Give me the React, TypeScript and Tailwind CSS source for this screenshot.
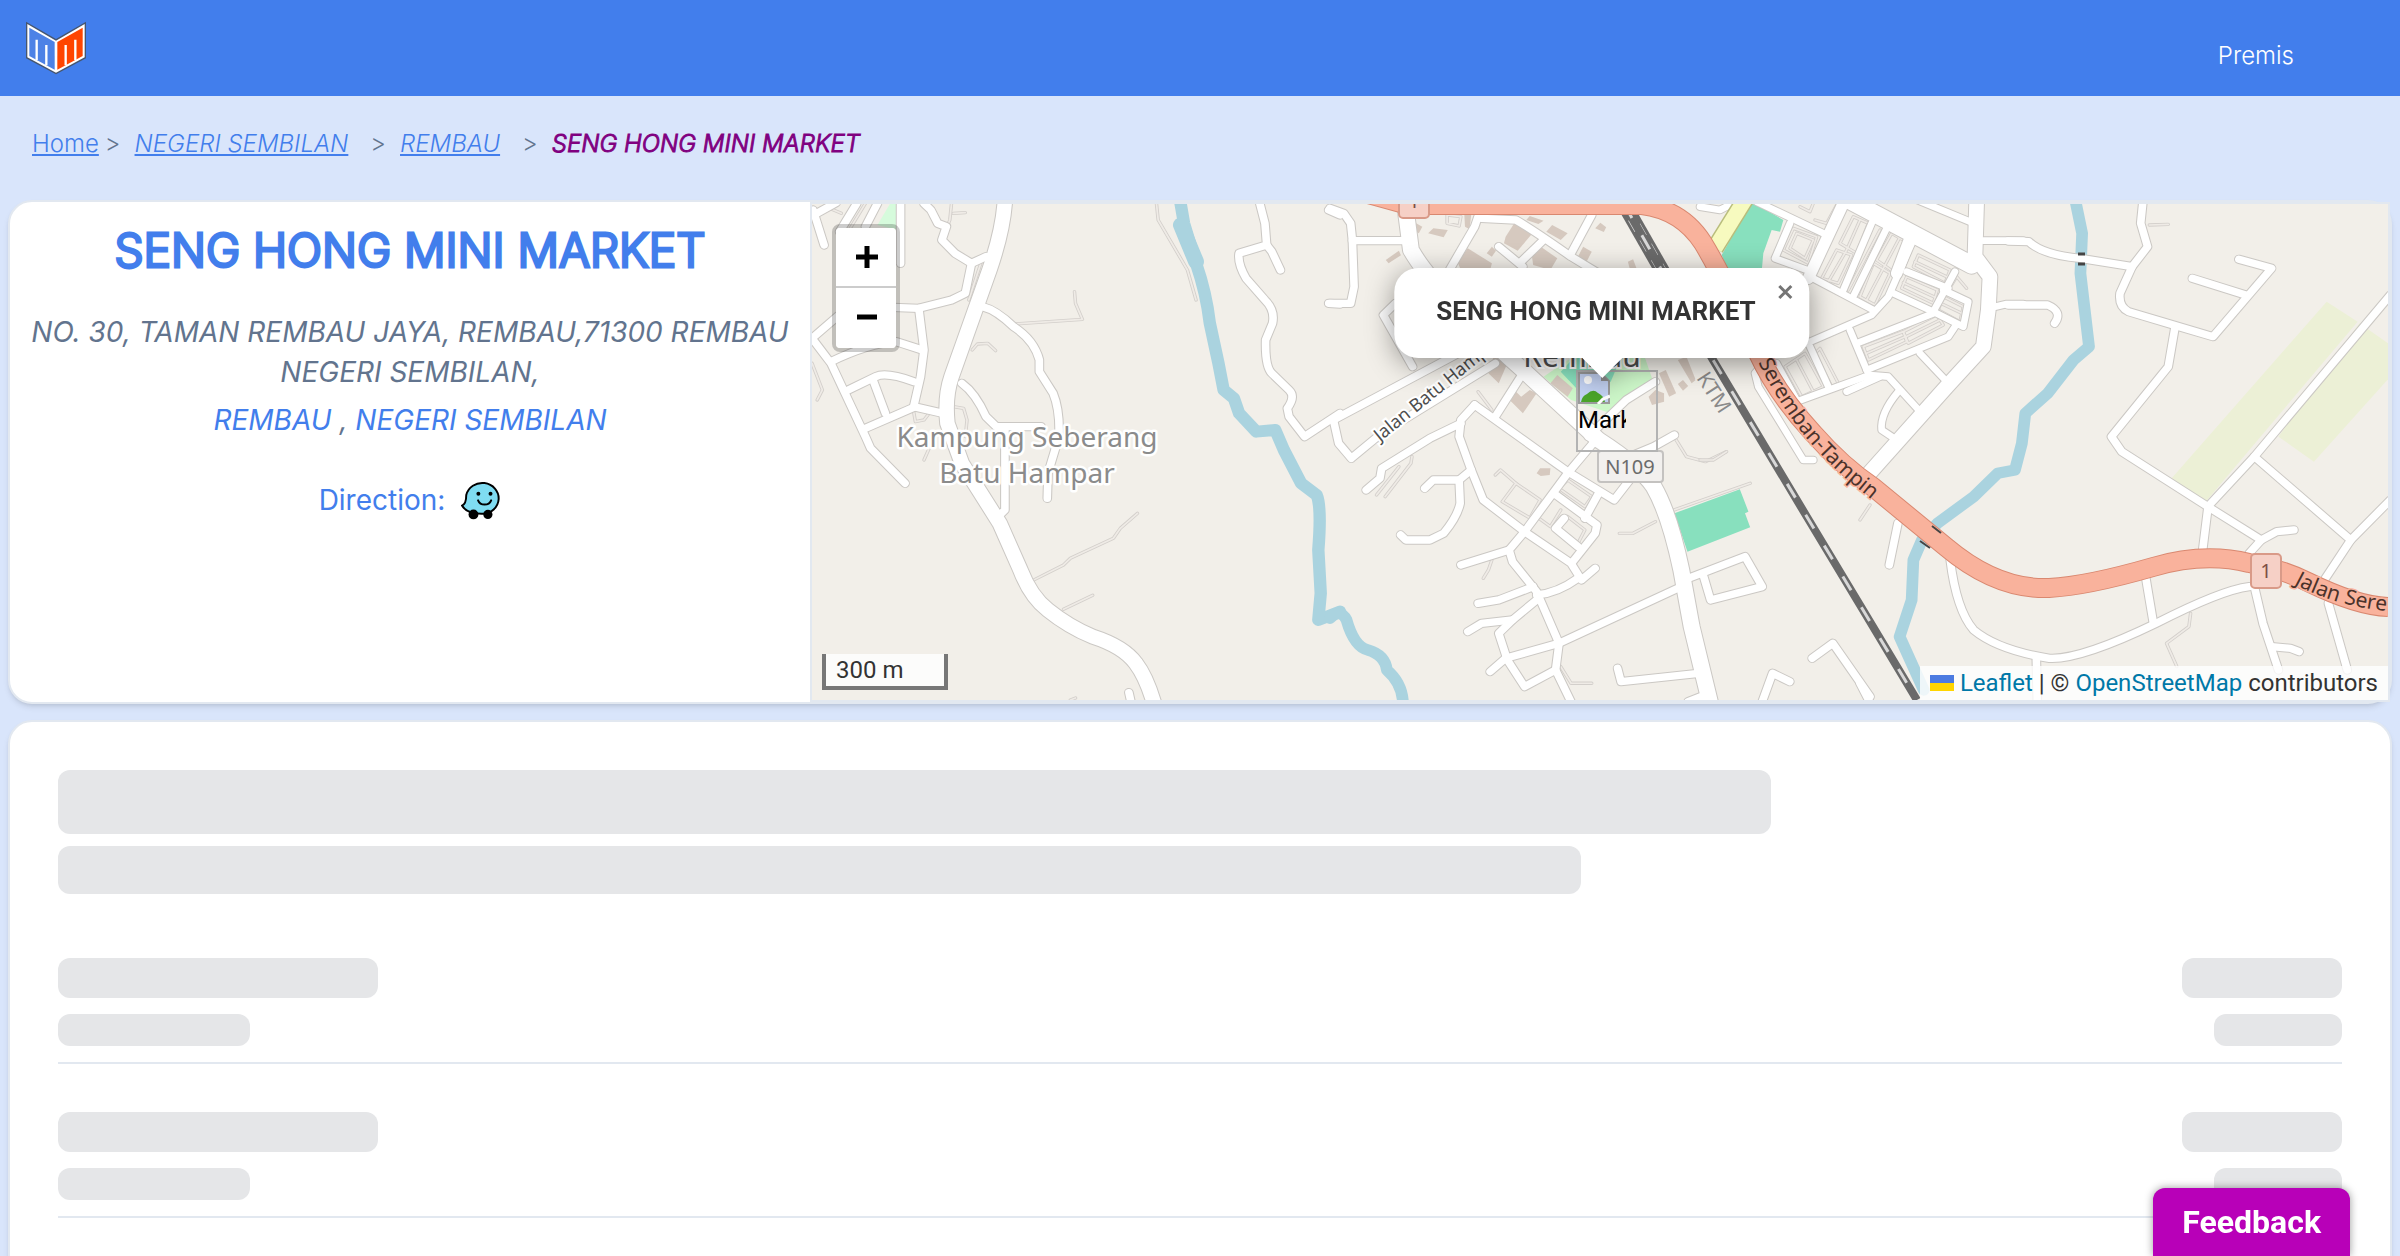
import React from 'react';

type Road = { d: string; w: number };

type Tile = {
  id: string;
  transform: string;
  areas: { d: string; fill: string }[];
  rivers: Road[];
  service: string[];
  roads: Road[];
};

const minor = (w: number, paths: string[]): Road[] => paths.map((d) => ({ d, w }));

// Every tile is drawn in its own units and scaled down into the map
const tiles: Tile[] = [
  {
    id: 'west',
    transform: 'translate(-12 -14) scale(0.3444 0.3333)',
    areas: [{ d: 'M225 105 L262 40 L282 40 L282 120 Z', fill: '#d6fbdc' }],
    rivers: [
      {
        d: 'M1105 40 L1115 100 L1150 220 Q1180 310 1190 400 L1215 520 L1230 600 L1260 625 L1275 670 L1325 725 L1380 720 L1405 780 L1455 880 L1500 915 Q1515 950 1505 1080 L1512 1210 L1505 1290 L1568 1265',
        w: 36,
      },
      { d: 'M1106 105 L1150 215', w: 46 },
    ],
    service: [
      'M797 305 L800 340 L820 388 L620 402',
      'M500 480 L515 462 L545 460 L568 482',
      'M675 1172 L765 1125 L785 1105 L910 1045 L930 1015 L980 970',
      'M765 1258 L850 1216',
      'M1035 40 L1040 90 L1125 240 L1150 330',
      'M445 650 L475 655 L485 690 L480 740',
      'M35 520 L65 600 L50 630',
      'M330 665 L335 695 L360 690 L375 670',
      'M375 775 L360 810',
      'M440 40 L435 90 L425 115',
      'M445 70 L480 68',
      'M190 40 L140 125',
      'M75 50 L120 70',
      'M525 220 L490 330',
      'M785 1530 L800 1524',
    ],
    roads: [
      ...minor(22, [
        'M38 60 L70 165',
        'M40 75 L105 38',
        'M165 40 L115 125',
        'M225 40 L190 110',
        'M292 40 L292 220',
        'M360 40 L380 60 L400 100 L425 110 L412 150 L450 190 L498 220 L540 200',
        'M498 220 L480 310 L440 330 L345 355 L270 352',
        'M35 445 L110 378',
        'M345 355 L360 480 L350 560 L330 650 L415 670',
        'M35 445 L90 520 L190 740 L205 775 L305 880',
        'M90 515 Q200 460 280 455 L355 480',
        'M140 600 L220 560 Q250 545 330 575',
        'M212 570 L248 670',
        'M190 715 L335 650',
        'M530 350 Q570 360 620 410 Q680 450 695 510 L695 545 L735 610 Q755 660 752 740 L720 850 L718 925',
        'M470 580 Q510 610 540 680 L570 710 L700 710',
        'M595 720 L595 960 L575 980',
        'M1335 40 L1350 100 L1355 165 L1275 190 Q1270 220 1295 265 L1350 330 Q1380 360 1372 400 L1352 450 Q1350 530 1370 550 L1420 600 Q1440 620 1415 655 L1420 680 L1465 740 L1568 670',
        'M1355 165 L1370 185 L1395 240',
        'M1535 60 L1568 75',
        'M1535 340 L1568 342',
        'M955 1508 L962 1540',
      ]),
      {
        d: 'M595 30 Q590 120 550 240 L440 560 Q420 620 428 700 L470 820 L580 1000 L640 1140 Q670 1220 720 1260 Q780 1310 850 1340 Q940 1370 975 1420 Q1005 1460 1028 1540',
        w: 42,
      },
    ],
  },
  {
    id: 'centre',
    transform: 'translate(518 -14) scale(0.3444 0.3333)',
    areas: [
      { d: 'M620 560 L720 490 L910 490 L940 580 L815 670 L700 630 Z', fill: '#cdf7c9' },
      { d: 'M670 545 L720 490 L850 490 L815 575 L720 600 Z', fill: '#88e0be' },
      { d: 'M1000 970 L1190 898 L1215 965 L1205 970 L1220 1012 L1038 1085 Z', fill: '#88e0be' },
      { d: 'M510 140 L535 100 L588 130 L545 182 L505 160 Z', fill: '#d6c9bf' },
      { d: 'M370 215 L400 175 L470 220 L465 240 L380 240 Z', fill: '#d6c9bf' },
      { d: 'M585 190 L605 165 L660 205 L640 240 L590 225 Z', fill: '#d6c9bf' },
      { d: 'M285 130 L300 115 L342 120 L330 142 Z', fill: '#d6c9bf' },
      { d: 'M570 90 L580 78 L620 92 L605 102 Z', fill: '#d6c9bf' },
      { d: 'M720 200 L735 170 L760 185 L745 215 Z', fill: '#d6c9bf' },
      { d: 'M240 120 L250 100 L268 110 L258 130 Z', fill: '#d6c9bf' },
      { d: 'M162 210 L200 182 L206 196 L170 220 Z', fill: '#d6c9bf' },
      { d: 'M770 115 L785 98 L802 112 L795 126 Z', fill: '#d6c9bf' },
      { d: 'M628 125 L645 105 L690 130 L670 150 Z', fill: '#d6c9bf' },
      { d: 'M455 190 L470 170 L482 182 L470 200 Z', fill: '#d6c9bf' },
      { d: 'M460 550 L475 500 L515 520 L490 580 Z', fill: '#d6c9bf' },
      { d: 'M512 620 L530 595 L555 620 L580 600 L600 610 L560 670 Z', fill: '#d6c9bf' },
      { d: 'M640 580 L660 555 L705 595 L690 620 Z', fill: '#d6c9bf' },
      { d: 'M600 850 L610 835 L640 835 L638 855 L612 858 Z', fill: '#d6c9bf' },
      { d: 'M925 620 L945 600 L970 610 L970 635 L935 645 Z', fill: '#d6c9bf' },
      { d: 'M955 550 L975 540 L1005 610 L985 620 Z', fill: '#d6c9bf' },
      { d: 'M1010 510 L1035 500 L1062 570 L1050 580 Z', fill: '#d6c9bf' },
      { d: 'M1010 582 L1025 570 L1040 588 L1025 602 Z', fill: '#d6c9bf' },
      { d: 'M865 215 L880 208 L890 235 L870 235 Z', fill: '#d6c9bf' },
      { d: 'M390 75 L410 75 L405 118 L392 110 Z', fill: '#d6c9bf' },
    ],
    rivers: [{ d: 'M0 1285 Q30 1255 48 1290 Q70 1370 110 1380 Q160 1395 165 1440 Q210 1480 212 1540', w: 34 }],
    service: [
      'M985 965 L1220 880',
      'M840 1030 L880 1030 L945 995',
      'M480 855 L495 840 L540 880 L500 935 L590 990',
      'M540 880 L610 930 L580 985',
      'M160 920 L235 820 L238 800',
      'M135 915 L200 830',
      'M430 605 L470 660',
      'M470 1110 L460 1140 L445 1165',
      'M670 1430 L700 1480 L760 1480',
      'M1005 750 L1035 800 L1090 815 L1150 785',
      'M665 895 L690 870 L760 920 L740 950 Z',
      'M690 980 L740 1020 L720 1060 L690 1035',
      'M600 980 L640 1010 L670 960',
      'M340 75 L380 80 L375 108 L340 100 Z',
    ],
    roads: [
      ...minor(22, [
        'M0 55 L40 70 L60 100 L65 150 L70 290 L60 340 L0 340',
        'M65 152 L215 152',
        'M430 80 L420 110 L330 270',
        'M440 85 L540 90 Q590 120 700 200 L780 250',
        'M760 75 L700 190',
        'M620 150 L550 220',
        'M490 170 L560 230',
        'M190 340 L155 375 L240 530',
        'M10 690 L500 420',
        'M10 690 L25 760 L62 805 L150 730 L480 520',
        'M560 550 L480 680',
        'M420 645 L690 845 L825 930 L870 870',
        'M420 645 L380 690 L375 740 L410 840 L445 930 L565 1025 L700 1120 L730 1170 L770 1135',
        'M380 700 L290 745 L150 835 L145 865 L105 900',
        'M780 740 L690 850 L565 1025 L520 1080 L530 1115 L600 1205 L665 1360 L655 1440 L702 1540',
        'M520 1080 L380 1125',
        'M275 895 L300 870 L375 870 L410 840',
        'M375 870 L378 940 Q370 980 330 1030 L290 1050 L220 1050 L205 1035',
        'M650 910 L775 1005 L770 1030 L705 1115',
        'M780 910 L740 985',
        'M680 985 L655 1015 L720 1070',
        'M600 1215 Q660 1210 720 1165',
        'M590 1190 L490 1230 L430 1240',
        'M600 1230 L530 1290 L440 1300 L400 1325',
        'M530 1290 L490 1330 L515 1410 L565 1490 L655 1440',
        'M465 1445 L510 1405 L665 1360 L1010 1195',
        'M870 800 L940 770 L1000 735',
        'M945 575 L860 630 L750 740',
        'M1040 1165 L1205 1100 L1255 1190 L1105 1230 L1085 1160',
        'M835 1435 L845 1475 L1070 1450',
        'M1040 1535 L1090 1515',
        'M1400 1405 L1460 1360 L1568 1520',
        'M1255 1535 L1285 1450 L1335 1475',
      ]),
      {
        d: 'M220 60 L235 180 Q300 300 560 540 L780 750 Q900 830 940 890 Q985 970 1020 1140 L1050 1310 L1104 1540',
        w: 46,
      },
    ],
  },
  {
    id: 'north',
    transform: 'translate(888 -4) scale(0.3333)',
    areas: [{ d: 'M155 5 L250 60 L240 95 L215 90 L190 160 L185 215 L85 215 L65 165 Z', fill: '#88e0be' }],
    rivers: [],
    service: [
      'M420 130 L460 50 L505 70 L470 160 Z',
      'M365 235 L410 150 L455 165 L415 250 Z',
      'M480 60 L440 150 L385 245',
      'M540 90 L445 270',
      'M530 180 L575 100 L618 125 L580 215 Z',
      'M480 290 L520 190 L570 220 L525 315 Z',
      'M598 115 L550 205 L500 300',
      'M640 200 L655 165 L750 210 L735 250 Z',
      'M645 185 L740 230',
      'M605 265 L620 230 L712 270 L700 310 Z',
      'M610 248 L705 292',
      'M715 330 L730 290 L790 320 L780 365 Z',
      'M722 310 L785 340',
      'M755 255 L770 230 L800 265',
      'M490 440 L610 395 L620 425 L505 480 Z',
      'M500 460 L615 410',
      'M610 395 L710 345 L730 375 L625 430 Z',
      'M618 410 L720 360',
      'M255 500 L315 460 L370 560 L305 590 Z',
      'M290 480 L340 575',
      'M345 460 L360 445 L415 550 L395 560 Z',
      'M250 150 L280 85 L350 110 L325 190 Z',
      'M270 145 L290 100 L340 120 L315 175 Z',
      'M300 20 L330 35 L340 10',
      'M345 60 L380 70 L410 15',
      'M0 780 L40 780 L80 755',
      'M480 960 L510 915',
    ],
    roads: [
      ...minor(20, [
        'M0 20 L60 30 L95 12',
        'M640 -5 L810 65',
        'M850 122 L970 122',
        'M885 320 L920 312 L970 312',
        'M170 5 L370 100',
        'M270 70 L225 175 L320 210',
        'M340 235 L520 330',
        'M515 70 L430 270',
        'M565 75 L462 285',
        'M635 130 L565 290 L515 345 L320 430',
        'M580 280 L700 335 L790 380 L805 305 L730 270',
        'M765 215 L700 335',
        'M620 215 L745 265',
        'M450 390 L500 510',
        'M700 340 L470 430',
        'M330 440 L385 560',
        'M500 510 L745 410 L765 380',
        'M660 460 L745 550',
        'M290 605 L510 525 L565 530 L665 640',
        'M440 575 L540 530',
        'M595 575 Q540 640 545 690 L590 720',
        'M200 480 L165 520 L175 560 L310 780 L340 780',
        'M230 490 L290 600',
      ]),
      ...minor(34, ['M430 10 L325 235', 'M630 115 L590 220']),
      { d: 'M390 -30 L815 195', w: 52 },
      { d: 'M830 5 L825 170 L870 230 L865 330 L850 440 L740 560 L490 840', w: 44 },
    ],
  },
  {
    id: 'east',
    transform: 'translate(1048 -14) scale(0.3444 0.3333)',
    areas: [
      { d: 'M1355 335 L1445 395 L1000 940 L905 865 Z', fill: '#ecf0d6' },
      { d: 'M1450 400 L1540 465 L1540 560 L1318 815 L1215 740 Z', fill: '#ecf0d6' },
    ],
    rivers: [
      {
        d: 'M625 30 L645 130 L640 250 L665 470 L620 510 L545 610 L480 670 L470 760 L450 840 L400 850 L330 920 L225 1000 L180 1050 L155 1110 L150 1230 L115 1340 L185 1500',
        w: 34,
      },
    ],
    service: ['M840 105 L895 103', 'M960 1270 L955 1310 L890 1360 L920 1430'],
    roads: minor(22, [
      'M430 153 L490 155 Q530 195 640 205 L790 230',
      'M430 345 L545 345 Q590 365 565 400',
      'M822 30 L815 100 L835 170 L790 230 L755 310 Q750 350 780 365 L910 405 L1025 440 L1195 235 L1100 208',
      'M1120 315 L965 265',
      'M915 410 L895 530 L730 740 L760 785 L1010 950 L1165 1050 L1210 1025 L1260 1020',
      'M1165 1050 L1130 1090',
      'M1010 955 L995 1080',
      'M1010 950 L1145 800 L1540 315',
      'M1145 800 L1425 1050',
      'M1540 930 L1425 1050 L1345 1175',
      'M1360 1240 L1415 1440',
      'M1145 1190 L1170 1300 L1215 1440',
      'M1195 1370 L1250 1375 L1275 1385',
      'M262 1110 Q280 1260 330 1320 Q400 1380 550 1405 Q640 1410 860 1300 Q1050 1200 1130 1190',
      'M830 1165 L852 1300',
      'M512 1410 L515 1540',
      'M110 1000 L85 1125',
      'M0 1480 L30 1540',
    ]),
  },
];

const trunk =
  'M549 -12 L596 1 L830 1 Q870 6 891 39 Q910 70 946 149 Q965 190 1001 229 Q1030 262 1061 283 L1134 343 Q1185 386 1237 384 Q1275 382 1341 363 Q1392 348 1437 359 Q1470 365 1496 378 Q1545 402 1576 403';
const trunkLabel =
  'M760 -20 L891 39 Q910 70 942 149 Q960 190 995 235 Q1023 267 1054 291 L1126 351';
const railway = 'M812 0 L901 156 L995 313 L1048 401 L1105 496';

const MapCanvas: React.FC = () => (
  <svg
    className="block h-full w-full"
    viewBox="0 0 1576 496"
    preserveAspectRatio="xMidYMid slice"
    aria-hidden="true"
    fontFamily='"Noto Sans", sans-serif'
  >
    <rect width="1576" height="496" fill="#f2efe9" />
    {tiles.map((tile) => (
      <g key={tile.id} transform={tile.transform} fill="none" strokeLinejoin="round">
        {tile.areas.map((area) => (
          <path key={area.d} d={area.d} fill={area.fill} />
        ))}
        {tile.rivers.map((river) => (
          <path key={river.d} d={river.d} stroke="#aad3df" strokeWidth={river.w} strokeLinecap="round" />
        ))}
      </g>
    ))}
    {tiles.map((tile) => (
      <g key={tile.id} transform={tile.transform} fill="none" strokeLinejoin="round" strokeLinecap="round">
        {tile.service.map((d) => (
          <path key={d} d={d} stroke="#d3cfcb" strokeWidth={10} />
        ))}
        {tile.service.map((d) => (
          <path key={`${d}-fill`} d={d} stroke="#efebe6" strokeWidth={5} />
        ))}
        {tile.roads.map((road) => (
          <path key={road.d} d={road.d} stroke="#cbc8c4" strokeWidth={road.w + 6} />
        ))}
      </g>
    ))}
    {tiles.map((tile) => (
      <g key={tile.id} transform={tile.transform} fill="none" strokeLinejoin="round" strokeLinecap="round">
        {tile.roads.map((road) => (
          <path key={road.d} d={road.d} stroke="#ffffff" strokeWidth={road.w} />
        ))}
      </g>
    ))}

    <g fill="none">
      <path d="M812 0 L872 105" stroke="#6a6a6a" strokeWidth="15" />
      <path d="M816 0 L876 105" stroke="#d8d8d8" strokeWidth="2" strokeDasharray="13 10" />
      <path d="M810 4 L868 105" stroke="#d8d8d8" strokeWidth="2" strokeDasharray="13 10" strokeDashoffset="9" />
      <path d={railway} stroke="#6a6a6a" strokeWidth="8" />
      <path d={railway} stroke="#d8d8d8" strokeWidth="3" strokeDasharray="16 20" />
      <path d="M934 -6 L903 44" stroke="#b9bd7c" strokeWidth="18" />
      <path d="M934 -6 L903 44" stroke="#f7fabf" strokeWidth="15" />
      <path d={trunk} stroke="#d98870" strokeWidth="20" />
      <path d={trunk} stroke="#f9b29c" strokeWidth="18" />
      <path d="M1120 322 L1129 329 M1108 337 L1118 344" stroke="#444444" strokeWidth="2" />
      <path d="M1266 50 h7 M1266 60 h7" stroke="#444444" strokeWidth="3" />
    </g>

    <g fill="#8b8b8b" stroke="#ffffff" strokeWidth="5" strokeLinejoin="round" paintOrder="stroke" textAnchor="middle" fontSize="28">
      <text x="215" y="243">Kampung Seberang</text>
      <text x="215" y="279">Batu Hampar</text>
    </g>
    <text x="770" y="163" fill="#4d4d4d" stroke="#ffffff" strokeWidth="4" paintOrder="stroke" textAnchor="middle" fontSize="30">
      Rembau
    </text>
    <text transform="translate(568 238) rotate(-39)" fill="#4d4d4d" stroke="#ffffff" strokeWidth="4" paintOrder="stroke" fontSize="18">
      Jalan Batu Hampar
    </text>
    <text transform="translate(884 174) rotate(57)" fill="#8a8a8a" stroke="#f2efe9" strokeWidth="3" paintOrder="stroke" fontSize="21">
      KTM
    </text>
    <path id="trunk-label" d={trunkLabel} fill="none" />
    <path id="trunk-label-east" d="M1482 380 Q1530 406 1600 409" fill="none" />
    <g fill="#4b322b" stroke="#f9b29c" strokeWidth="3" paintOrder="stroke" fontSize="21">
      <text textAnchor="end">
        <textPath href="#trunk-label" startOffset="84%">
          Jalan Seremban-Tampin
        </textPath>
      </text>
      <text>
        <textPath href="#trunk-label-east">Jalan Sere</textPath>
      </text>
    </g>

    <g strokeWidth="2" textAnchor="middle" fontSize="20">
      <rect x="587" y="-20" width="30" height="34" rx="4" fill="#f6d0c6" stroke="#d99a88" />
      <text x="602" y="4" fill="#7c4f45">1</text>
      <rect x="1439" y="350" width="30" height="34" rx="4" fill="#f6d0c6" stroke="#d99a88" />
      <text x="1454" y="374" fill="#7c4f45">1</text>
      <rect x="786" y="247" width="65" height="31" rx="3" fill="#f2f0ee" stroke="#c4c2c0" />
      <text x="818" y="270" fill="#6b6b6b">N109</text>
    </g>
  </svg>
);

const Logo: React.FC = () => (
  <svg className="h-14 w-15" viewBox="0 0 180 162" aria-hidden="true">
    <path d="M0 2 L90 54 L180 2 V112 L90 160 L0 112 Z" fill="#46566f" />
    <path d="M4 9 L90 59 L176 9 V109 L90 155 L4 109 Z" fill="#ffffff" />
    <path d="M10 20 L86 63 V146 L10 105 Z" fill="#4d82e6" />
    <path d="M32 56 V117 M61 72 V133" stroke="#ffffff" strokeWidth="7" />
    <path d="M170 20 L94 63 V146 L170 105 Z" fill="#ff4500" />
    <path d="M148 56 V117 M119 72 V133" stroke="#ffffff" strokeWidth="7" />
  </svg>
);

const WazeIcon: React.FC = () => (
  <svg className="h-10 w-10" viewBox="0 0 122 122" aria-hidden="true">
    <path
      d="M16 46 A50 47 0 1 1 66 103 Q18 104 3 78 Q16 74 16 46 Z"
      fill="#7fdcf2"
      stroke="#000000"
      strokeWidth="6"
      strokeLinejoin="round"
    />
    <circle cx="38" cy="105" r="15" />
    <circle cx="82" cy="105" r="14" />
    <circle cx="53" cy="42" r="6" />
    <circle cx="90" cy="42" r="6" />
    <path d="M52 62 Q57 75 72 75 Q87 75 92 62" fill="none" stroke="#000000" strokeWidth="6" strokeLinecap="round" />
  </svg>
);

const BrokenImage: React.FC = () => (
  <svg className="block h-8 w-8" viewBox="0 0 32 32" aria-hidden="true">
    <path d="M1 1 H23 L31 9 V31 H1 Z" fill="#c4d3f4" stroke="#9c9c9c" strokeWidth="2" />
    <circle cx="10" cy="8" r="4" fill="#ffffff" />
    <path d="M3 30 Q4 24 9 22 Q15 16 20 21 Q26 24 27 30 Z" fill="#4ba52a" />
    <path d="M23 1 V9 H31 Z" fill="#8f8f8f" />
    <path d="M20 32 L25 27 L32 24" fill="none" stroke="#ffffff" strokeWidth="3" />
  </svg>
);

const StoreMap: React.FC = () => (
  <div className="relative h-[500px] min-w-0 flex-1 overflow-hidden border-2 border-slate-200 font-[Roboto,sans-serif] text-2xl font-normal text-[#333333]">
    <MapCanvas />

    <div className="absolute top-5 left-5 flex flex-col rounded-lg border-4 border-black/20 bg-clip-padding">
      <button aria-label="Zoom in" className="flex h-15 w-15 items-center justify-center rounded-t border-b-2 border-[#cccccc] bg-white">
        <svg className="h-6 w-6" viewBox="0 0 24 24" aria-hidden="true">
          <path d="M13 1 V23 M2 12 H24" stroke="#000000" strokeWidth="5" />
        </svg>
      </button>
      <button aria-label="Zoom out" className="flex h-15 w-15 items-center justify-center rounded-b bg-white">
        <svg className="h-6 w-6" viewBox="0 0 24 24" aria-hidden="true">
          <path d="M3 11 H23" stroke="#000000" strokeWidth="5" />
        </svg>
      </button>
    </div>

    <div className="absolute top-[166px] left-1/2 -ml-6 h-[82px] w-[82px] border-2 border-[#b3b3b3]">
      <BrokenImage />
      <div className="w-12 overflow-hidden leading-8 text-black">Marker</div>
    </div>

    <div className="absolute top-16 left-1/2 ml-0.5 -translate-x-1/2 drop-shadow-[0_6px_14px_rgba(0,0,0,0.4)]">
      <div className="relative flex h-[90px] items-center rounded-3xl bg-white pr-[54px] pl-[42px]">
        <div className="pb-1 text-[26px] font-bold whitespace-nowrap">SENG HONG MINI MARKET</div>
        <button aria-label="Close popup" className="absolute top-0 right-0 flex h-12 w-12 items-center justify-center">
          <svg className="h-4 w-4" viewBox="0 0 16 16" aria-hidden="true">
            <path d="M2 2 L14 14 M14 2 L2 14" stroke="#757575" strokeWidth="3" />
          </svg>
        </button>
      </div>
      <svg className="mx-auto block h-5 w-10" viewBox="0 0 40 20" aria-hidden="true">
        <path d="M0 0 H40 L20 20 Z" fill="#ffffff" />
      </svg>
    </div>

    <div className="absolute bottom-[10px] left-[10px] h-9 w-[126px] border-x-4 border-b-4 border-[#777777] bg-white/80 px-[10px] leading-8">
      300 m
    </div>

    <div className="absolute right-0 bottom-0 flex h-[34px] items-center bg-white/80 px-[10px] whitespace-pre">
      <svg className="mr-1.5 h-4 w-6" viewBox="0 0 24 16" aria-hidden="true">
        <path d="M0 0 H24 V8 H0 Z" fill="#4c7be1" />
        <path d="M0 8 H24 V16 H0 Z" fill="#ffd500" />
      </svg>
      <a href="#leaflet" className="text-[#0078a8]">Leaflet</a>
      {' | © '}
      <a href="#openstreetmap" className="text-[#0078a8]">OpenStreetMap</a>
      {' contributors'}
    </div>
  </div>
);

const SkeletonRow: React.FC = () => (
  <div className="flex justify-between border-b-2 border-slate-200 pb-4">
    <div className="space-y-4">
      <div className="h-10 w-80 rounded-xl bg-[#e5e6e8]" />
      <div className="h-8 w-48 rounded-xl bg-[#e5e6e8]" />
    </div>
    <div className="flex flex-col items-end space-y-4">
      <div className="h-10 w-40 rounded-xl bg-[#e5e6e8]" />
      <div className="h-8 w-32 rounded-xl bg-[#e5e6e8]" />
    </div>
  </div>
);

export default function App() {
  return (
    <div className="h-screen overflow-hidden bg-[#d9e5fb] font-[Inter,sans-serif] font-light text-slate-500">
      <header className="flex h-24 items-center justify-between bg-[#427eec] pr-[106px] pl-[26px]">
        <a href="#home" aria-label="Home">
          <Logo />
        </a>
        <a href="#premis" className="pt-4 text-2xl text-white">
          Premis
        </a>
      </header>

      <nav aria-label="Breadcrumb" className="flex h-24 items-center px-8 text-2xl">
        <a href="#home" className="text-[#427eec] underline">Home</a>
        <span className="mr-3.5 ml-1.5">&gt;</span>
        <a href="#negeri-sembilan" className="text-[#427eec] italic underline">NEGERI SEMBILAN</a>
        <span className="mr-3.5 ml-5.5">&gt;</span>
        <a href="#rembau" className="text-[#427eec] italic underline">REMBAU</a>
        <span className="mr-3.5 ml-5.5">&gt;</span>
        <span className="text-[#800080] italic [-webkit-text-stroke:1px_#800080]">SENG HONG MINI MARKET</span>
      </nav>

      <main className="space-y-4 p-2">
        <section className="flex rounded-3xl border-2 border-slate-200 bg-white shadow-md">
          <div className="w-[800px] shrink-0 px-5 pt-[18px] text-center text-[28px] leading-10">
            <h1 className="text-[46px] leading-[60px] text-[#427eec] [-webkit-text-stroke:3px_#427eec]">SENG HONG MINI MARKET</h1>
            <p className="mt-8 font-normal italic">NO. 30, TAMAN REMBAU JAYA, REMBAU,71300 REMBAU NEGERI SEMBILAN,</p>
            <p className="mt-2 font-normal italic">
              <a href="#rembau" className="text-[#427eec]">REMBAU</a> ,{' '}
              <a href="#negeri-sembilan" className="text-[#427eec]">NEGERI SEMBILAN</a>
            </p>
            <div className="mt-9 flex h-12 items-center justify-center font-normal text-[#427eec]">
              <span>Direction:</span>
              <a href="#waze" aria-label="Open in Waze" className="ml-4">
                <WazeIcon />
              </a>
            </div>
          </div>
          <StoreMap />
        </section>

        <section aria-label="Loading prices" className="rounded-3xl border-2 border-slate-200 bg-white p-12 shadow-md">
          <div className="h-16 w-3/4 rounded-xl bg-[#e5e6e8]" />
          <div className="mt-3 h-12 w-2/3 rounded-xl bg-[#e5e6e8]" />
          <div className="mt-16 space-y-12">
            <SkeletonRow />
            <SkeletonRow />
            <SkeletonRow />
          </div>
        </section>
      </main>

      <button className="fixed right-[50px] bottom-0 h-[68px] rounded-t-xl bg-[#b800b8] px-[29px] font-[Roboto,sans-serif] text-[32px] font-bold text-white shadow-[0_0_8px_rgba(0,0,0,0.4)]">
        Feedback
      </button>
    </div>
  );
}
